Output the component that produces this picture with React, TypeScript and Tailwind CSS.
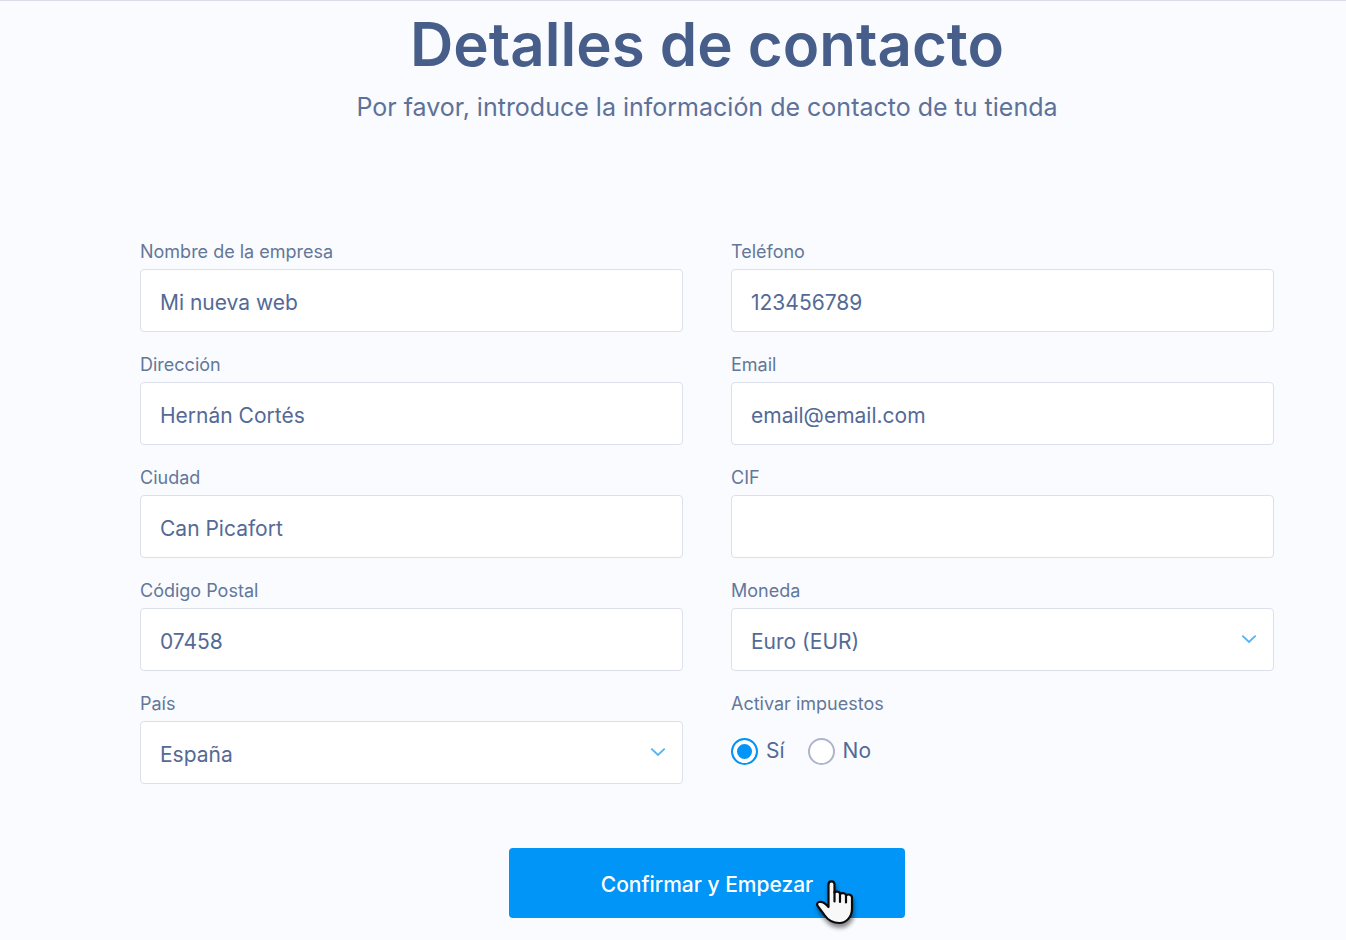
import type { ReactNode } from "react";

const fieldClass =
  "block h-[63px] w-full rounded border border-[#dbe0ea] bg-white px-[19px] pt-1 text-[21px] text-[#546a96] outline-none focus:border-[#0095f7]";

function Field({ id, label, children }: { id: string; label: string; children: ReactNode }) {
  return (
    <div>
      <label htmlFor={id} className="block h-[27px] text-[18px] leading-5 text-[#647799]">
        {label}
      </label>
      {children}
    </div>
  );
}

function TextField({ id, label, value = "", type = "text" }: { id: string; label: string; value?: string; type?: string }) {
  return (
    <Field id={id} label={label}>
      <input id={id} name={id} type={type} defaultValue={value} className={fieldClass} />
    </Field>
  );
}

function SelectField({ id, label, options }: { id: string; label: string; options: string[] }) {
  return (
    <Field id={id} label={label}>
      <div className="relative">
        <select id={id} name={id} className={`${fieldClass} appearance-none`}>
          {options.map((option) => (
            <option key={option}>{option}</option>
          ))}
        </select>
        <svg
          className="pointer-events-none absolute top-[26px] right-[17px] h-[10px] w-4"
          viewBox="0 0 16 10"
          fill="none"
          stroke="#4fb4f8"
          strokeWidth="1.8"
          aria-hidden="true"
        >
          <path d="M1.3 1.6L8 8L14.7 1.6" />
        </svg>
      </div>
    </Field>
  );
}

function RadioOption({ id, label, checked = false }: { id: string; label: string; checked?: boolean }) {
  return (
    <div className="flex items-center gap-2">
      <input
        id={id}
        type="radio"
        name="impuestos"
        defaultChecked={checked}
        className="m-0 size-[27px] appearance-none rounded-full border-2 border-[#abb5cb] bg-white checked:border-[#0095f7] checked:bg-[#0095f7] checked:shadow-[inset_0_0_0_4px_white]"
      />
      <label htmlFor={id} className="text-[21px] leading-7 text-[#546a96]">
        {label}
      </label>
    </div>
  );
}

function HandCursor() {
  return (
    <svg
      className="pointer-events-none absolute top-[30px] right-[50px] h-[48px] w-[40px] drop-shadow-[1px_4px_2px_rgba(0,0,0,0.45)]"
      viewBox="0 0 40 48"
      fill="#f8f8f8"
      stroke="#0a0a0a"
      strokeWidth="2.2"
      strokeLinejoin="round"
      strokeLinecap="round"
      aria-hidden="true"
    >
      <path d="M13.5 26V6.5C13.5 2.2 19.5 2.2 19.5 6.5V14.5C21 12.8 25 13.5 25 16C27 14.3 31 15.2 31 17.5C33 15.7 37 16.5 37 19.5V31C37 38 32 45 24.5 45C17 45 12 41 9 36.5L3 28.5C1.5 26.5 2 24.5 4 24C7 23.3 10 24.5 13.5 29Z" />
      <path d="M19.5 14V23.5M25 16V24M31 17.5V24.5" fill="none" />
    </svg>
  );
}

export default function App() {
  return (
    <main className="min-h-screen border-t border-[#d9dbe7] bg-[#f9fbff] pr-[72px] pl-[140px] font-[Inter,'Liberation_Sans',sans-serif]">
      <header className="pt-2 text-center">
        <h1 className="text-[60px] leading-[70px] font-semibold text-[#465e89]">Detalles de contacto</h1>
        <p className="mt-[10px] text-[25px] leading-9 text-[#5d7199]">
          Por favor, introduce la información de contacto de tu tienda
        </p>
      </header>

      <form onSubmit={(event) => event.preventDefault()}>
        <div className="mt-[117px] grid grid-cols-2 gap-x-12">
          {/* Datos de la empresa */}
          <div className="flex flex-col gap-[23px]">
            <TextField id="empresa" label="Nombre de la empresa" value="Mi nueva web" />
            <TextField id="direccion" label="Dirección" value="Hernán Cortés" />
            <TextField id="ciudad" label="Ciudad" value="Can Picafort" />
            <TextField id="postal" label="Código Postal" value="07458" />
            <SelectField id="pais" label="País" options={["España"]} />
          </div>

          {/* Contacto e impuestos */}
          <div className="flex flex-col gap-[23px]">
            <TextField id="telefono" label="Teléfono" value="123456789" type="tel" />
            <TextField id="email" label="Email" value="email@email.com" type="email" />
            <TextField id="cif" label="CIF" />
            <SelectField id="moneda" label="Moneda" options={["Euro (EUR)"]} />
            <fieldset>
              <legend className="text-[18px] leading-5 text-[#647799]">Activar impuestos</legend>
              <div className="mt-[23px] flex gap-[23px]">
                <RadioOption id="impuestos-si" label="Sí" checked />
                <RadioOption id="impuestos-no" label="No" />
              </div>
            </fieldset>
          </div>
        </div>

        <div className="relative mx-auto mt-16 w-[396px]">
          <button
            type="submit"
            className="h-[70px] w-full cursor-pointer rounded bg-[#0095f7] pt-[3px] text-[21px] font-medium text-white"
          >
            Confirmar y Empezar
          </button>
          <HandCursor />
        </div>
      </form>
    </main>
  );
}
